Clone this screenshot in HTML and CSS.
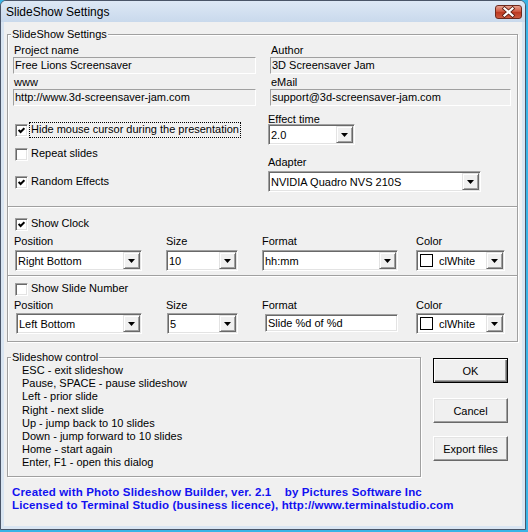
FILE: index.html
```html
<!DOCTYPE html>
<html lang="en">
<head>
  <meta charset="UTF-8">
  <title>SlideShow Settings</title>
  <link rel="stylesheet" href="styles.css">
</head>
<body>
  <div class="window">
    <div class="titlebar">
      <span class="title">SlideShow Settings</span>
      <span class="close-btn">
        <svg width="25" height="12" viewBox="0 0 25 12">
          <path d="M8.5 2.5 L16.5 9.5 M16.5 2.5 L8.5 9.5" stroke="#5b1d12" stroke-width="3.8" stroke-linecap="square"/>
          <path d="M8.5 2.5 L16.5 9.5 M16.5 2.5 L8.5 9.5" stroke="#fff" stroke-width="2.2" stroke-linecap="square"/>
        </svg>
      </span>
    </div>

    <div class="client">
      <div class="group main-group">
        <span class="group-title">SlideShow Settings</span>

        <div class="section info">
          <div class="fields">
            <div class="field">
              <span class="label">Project name</span>
              <div class="edit">Free Lions Screensaver</div>
            </div>
            <div class="field">
              <span class="label">Author</span>
              <div class="edit">3D Screensaver Jam</div>
            </div>
            <div class="field">
              <span class="label">www</span>
              <div class="edit">http://www.3d-screensaver-jam.com</div>
            </div>
            <div class="field">
              <span class="label">eMail</span>
              <div class="edit">support@3d-screensaver-jam.com</div>
            </div>
          </div>

          <div class="options">
            <div class="opt-left">
              <div class="check check-1">
                <span class="box"><svg width="7" height="7" viewBox="0 0 7 7"><path d="M0.6 3 L2.6 5 L6.4 1.2" stroke="#000" stroke-width="2" fill="none"/></svg></span>
                <span class="check-text focus">Hide mouse cursor during the presentation</span>
              </div>
              <div class="check check-2">
                <span class="box"></span>
                <span class="check-text">Repeat slides</span>
              </div>
              <div class="check check-3">
                <span class="box"><svg width="7" height="7" viewBox="0 0 7 7"><path d="M0.6 3 L2.6 5 L6.4 1.2" stroke="#000" stroke-width="2" fill="none"/></svg></span>
                <span class="check-text">Random Effects</span>
              </div>
            </div>
            <div class="opt-right">
              <span class="label label-effect">Effect time</span>
              <div class="combo w-effect">
                <span class="combo-text">2.0</span>
                <span class="combo-btn"><svg width="7" height="4" viewBox="0 0 7 4"><path d="M0 0 H7 L3.5 4 Z" fill="#000"/></svg></span>
              </div>
              <span class="label label-adapter">Adapter</span>
              <div class="combo w-adapter">
                <span class="combo-text">NVIDIA Quadro NVS 210S</span>
                <span class="combo-btn"><svg width="7" height="4" viewBox="0 0 7 4"><path d="M0 0 H7 L3.5 4 Z" fill="#000"/></svg></span>
              </div>
            </div>
          </div>
        </div>

        <div class="section clock">
          <div class="check">
            <span class="box"><svg width="7" height="7" viewBox="0 0 7 7"><path d="M0.6 3 L2.6 5 L6.4 1.2" stroke="#000" stroke-width="2" fill="none"/></svg></span>
            <span class="check-text">Show Clock</span>
          </div>
          <div class="row4">
            <span class="label">Position</span>
            <span class="label">Size</span>
            <span class="label">Format</span>
            <span class="label">Color</span>
            <div class="combo w-pos">
              <span class="combo-text">Right Bottom</span>
              <span class="combo-btn"><svg width="7" height="4" viewBox="0 0 7 4"><path d="M0 0 H7 L3.5 4 Z" fill="#000"/></svg></span>
            </div>
            <div class="combo w-size">
              <span class="combo-text">10</span>
              <span class="combo-btn"><svg width="7" height="4" viewBox="0 0 7 4"><path d="M0 0 H7 L3.5 4 Z" fill="#000"/></svg></span>
            </div>
            <div class="combo w-format">
              <span class="combo-text">hh:mm</span>
              <span class="combo-btn"><svg width="7" height="4" viewBox="0 0 7 4"><path d="M0 0 H7 L3.5 4 Z" fill="#000"/></svg></span>
            </div>
            <div class="combo w-color">
              <span class="swatch"></span>
              <span class="combo-text">clWhite</span>
              <span class="combo-btn"><svg width="7" height="4" viewBox="0 0 7 4"><path d="M0 0 H7 L3.5 4 Z" fill="#000"/></svg></span>
            </div>
          </div>
        </div>

        <div class="section number">
          <div class="check">
            <span class="box"></span>
            <span class="check-text">Show Slide Number</span>
          </div>
          <div class="row4">
            <span class="label">Position</span>
            <span class="label">Size</span>
            <span class="label">Format</span>
            <span class="label">Color</span>
            <div class="combo w-pos2">
              <span class="combo-text">Left Bottom</span>
              <span class="combo-btn"><svg width="7" height="4" viewBox="0 0 7 4"><path d="M0 0 H7 L3.5 4 Z" fill="#000"/></svg></span>
            </div>
            <div class="combo w-size2">
              <span class="combo-text">5</span>
              <span class="combo-btn"><svg width="7" height="4" viewBox="0 0 7 4"><path d="M0 0 H7 L3.5 4 Z" fill="#000"/></svg></span>
            </div>
            <div class="edit-white">Slide %d of %d</div>
            <div class="combo w-color">
              <span class="swatch"></span>
              <span class="combo-text">clWhite</span>
              <span class="combo-btn"><svg width="7" height="4" viewBox="0 0 7 4"><path d="M0 0 H7 L3.5 4 Z" fill="#000"/></svg></span>
            </div>
          </div>
        </div>
      </div>

      <div class="bottom">
        <div class="group control-group">
          <span class="group-title">Slideshow control</span>
          <div class="keys">
            <div>ESC - exit slideshow</div>
            <div>Pause, SPACE - pause slideshow</div>
            <div>Left - prior slide</div>
            <div>Right - next slide</div>
            <div>Up - jump back to 10 slides</div>
            <div>Down - jump forward to 10 slides</div>
            <div>Home - start again</div>
            <div>Enter, F1 - open this dialog</div>
          </div>
        </div>
        <div class="buttons">
          <div class="btn btn-default">OK</div>
          <div class="btn btn-cancel">Cancel</div>
          <div class="btn btn-export">Export files</div>
        </div>
      </div>

      <div class="credits">
        <div class="credit-line">Created with Photo Slideshow Builder, ver. 2.1    by Pictures Software Inc</div>
        <div class="credit-line">Licensed to Terminal Studio (business licence), http://www.terminalstudio.com</div>
      </div>
    </div>
  </div>
</body>
</html>
```

FILE: styles.css
```css
body {
  margin: 0;
  background: #3ab4e6;
  font-family: "Liberation Sans", Arial, sans-serif;
  font-size: 11px;
  color: #000;
}

.window {
  width: 526px;
  height: 530px;
  box-sizing: border-box;
  border: 1px solid #4a5568;
  border-radius: 6px 6px 0 0;
  background: #d9e5f2;
  padding: 0 3px 3px;
  display: flex;
  flex-direction: column;
}

.titlebar {
  height: 21px;
  margin: 0 -3px;
  padding: 4px 3px 0 5px;
  box-sizing: border-box;
  display: flex;
  justify-content: space-between;
  align-items: flex-start;
  background: linear-gradient(#dde8f5, #c9d9ec);
  border-radius: 5px 5px 0 0;
}

.title {
  font-size: 12px;
  line-height: 15px;
}

.close-btn {
  width: 27px;
  height: 14px;
  box-sizing: border-box;
  border: 1px solid #6e2a1e;
  border-radius: 3px;
  background: linear-gradient(#e6a08f, #d05a42 45%, #bd3820 52%, #cc5a40);
  display: flex;
}

.client {
  flex: 1;
  background: #f0f0f0;
}

/* group boxes */
.group {
  border: 1px solid #a0a0a0;
  box-shadow: 1px 1px 0 #fff, inset 1px 1px 0 #fff;
}

.group-title {
  display: block;
  width: max-content;
  margin: -7px 0 0 3px;
  padding: 0 1px;
  background: #f0f0f0;
  line-height: 13px;
}

.main-group {
  margin: 12px 4px 0 3px;
}

.section + .section {
  border-top: 1px solid #a0a0a0;
  box-shadow: inset 0 1px 0 #fff;
}

.label {
  display: block;
  line-height: 13px;
}

/* project fields */
.fields {
  display: grid;
  grid-template-columns: 243px 241px;
  column-gap: 14px;
  row-gap: 2px;
  padding: 3px 0 0 5px;
}

.field .label {
  padding-left: 1px;
}

.edit {
  height: 17px;
  box-sizing: border-box;
  border: 1px solid;
  border-color: #a0a0a0 #fff #fff #a0a0a0;
  padding-left: 1px;
  line-height: 14px;
  white-space: nowrap;
}

.info {
  padding-bottom: 14px;
}

.options {
  display: flex;
  padding-left: 7px;
}

.opt-left {
  width: 253px;
  display: flex;
  flex-direction: column;
  align-items: flex-start;
}

.opt-right {
  display: flex;
  flex-direction: column;
  align-items: flex-start;
}

/* check boxes */
.check {
  display: flex;
  align-items: flex-start;
  gap: 3px;
  height: 13px;
  white-space: nowrap;
}

.check-text {
  line-height: 11px;
}

.check-1 { margin-top: 18px; }
.check-2 { margin-top: 11px; }
.check-3 { margin-top: 15px; }

.box {
  width: 13px;
  height: 13px;
  box-sizing: border-box;
  border: 1px solid;
  border-color: #a0a0a0 #fff #fff #a0a0a0;
  box-shadow: inset 1px 1px #696969, inset -1px -1px #e3e3e3;
  background: #fff;
  display: flex;
  align-items: center;
  justify-content: center;
}

.focus {
  outline: 1px dotted #000;
  padding: 1px 1px 2px;
  margin: -1px 0 0 -1px;
}

.label-effect {
  margin: 7px 0 -2px;
}

.label-adapter {
  margin-top: 11px;
}

.w-adapter {
  margin-top: 2px;
}

/* combo boxes */
.combo {
  height: 21px;
  box-sizing: border-box;
  border: 1px solid;
  border-color: #a0a0a0 #fff #fff #a0a0a0;
  box-shadow: inset 1px 1px #696969, inset -1px -1px #e3e3e3;
  background: #fff;
  display: flex;
  align-items: center;
  padding: 1px 1px 1px 2px;
}

.combo-text {
  flex: 1;
  white-space: nowrap;
  overflow: hidden;
  line-height: 15px;
  padding-top: 1px;
}

.combo-btn {
  width: 17px;
  height: 17px;
  box-sizing: border-box;
  border: 1px solid;
  border-color: #e3e3e3 #696969 #696969 #e3e3e3;
  box-shadow: inset 1px 1px #fff, inset -1px -1px #a0a0a0;
  background: #f0f0f0;
  display: flex;
  align-items: center;
  justify-content: center;
}

.swatch {
  width: 13px;
  height: 13px;
  box-sizing: border-box;
  border: 1px solid #000;
  background: #fff;
  margin: 0 6px 0 1px;
}

.w-effect { width: 87px; }
.w-adapter { width: 213px; }
.w-pos { width: 127px; }
.w-size { width: 72px; }
.w-format { width: 136px; }
.w-color { width: 89px; }
.w-pos2 { width: 126px; margin-left: 1px; }
.w-size2 { width: 71px; margin-left: 1px; }

.edit-white {
  width: 133px;
  height: 18px;
  box-sizing: border-box;
  margin: 1px 0 0 3px;
  border: 1px solid;
  border-color: #a0a0a0 #fff #fff #a0a0a0;
  box-shadow: inset 1px 1px #696969, inset -1px -1px #e3e3e3;
  background: #fff;
  padding-left: 2px;
  line-height: 16px;
}

/* clock / slide number rows */
.clock,
.number {
  padding-left: 7px;
}

.clock {
  padding-top: 11px;
  padding-bottom: 4px;
}

.number {
  padding-top: 7px;
  padding-bottom: 7px;
}

.row4 {
  display: grid;
  grid-template-columns: 151px 96px 154px 89px;
  grid-template-rows: 13px auto;
  row-gap: 2px;
  margin-top: 4px;
}

.row4 .label:first-child {
  margin-left: -1px;
}

.number .row4 {
  margin-top: 3px;
  row-gap: 1px;
}

/* bottom area */
.bottom {
  display: flex;
  align-items: flex-start;
  margin: 15px 0 0 3px;
}

.control-group {
  width: 414px;
  height: 120px;
  box-sizing: border-box;
}

.keys {
  padding-left: 14px;
  line-height: 13.2px;
}

.buttons {
  display: flex;
  flex-direction: column;
  margin-left: 12px;
  padding-top: 1px;
}

.btn {
  width: 75px;
  height: 25px;
  box-sizing: border-box;
  border: 1px solid;
  border-color: #fff #696969 #696969 #fff;
  box-shadow: inset -1px -1px #a0a0a0, inset 1px 1px #e3e3e3;
  background: #f0f0f0;
  display: flex;
  align-items: center;
  justify-content: center;
}

.btn-default {
  border-color: #000;
  box-shadow: inset 1px 1px #fff, inset -1px -1px #696969, inset -2px -2px #a0a0a0;
}

.btn-cancel { margin-top: 15px; }
.btn-export { margin-top: 13px; }

.credits {
  margin: 9px 0 0 8px;
  font-weight: bold;
  font-size: 11.5px;
  letter-spacing: 0.15px;
  color: #1212f0;
  line-height: 13px;
}

.credit-line {
  white-space: pre;
}
```
